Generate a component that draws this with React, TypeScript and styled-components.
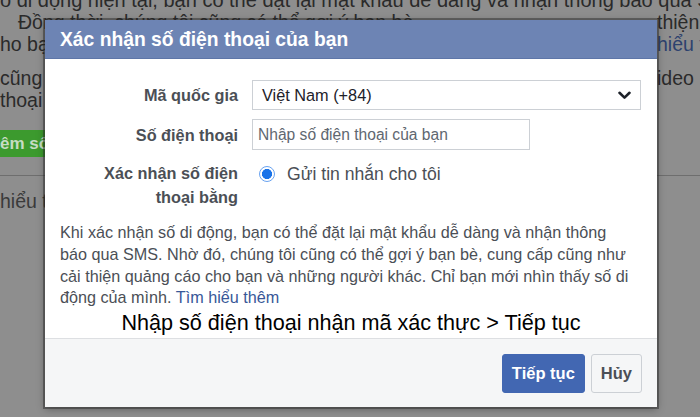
import React from "react";
import styled, { createGlobalStyle } from "styled-components";

const GlobalStyle = createGlobalStyle`
  html, body {
    margin: 0;
    padding: 0;
  }
  body {
    width: 700px;
    height: 417px;
    overflow: hidden;
    font-family: "Liberation Sans", Arial, sans-serif;
  }
`;

interface IBackLine {
  left: React.ReactNode;
  right?: React.ReactNode;
  indent?: number;
}

function BackLine(props: IBackLine) {
  return (
    <LineRow>
      <LeftFrag $indent={props.indent || 0}>{props.left}</LeftFrag>
      <RightFrag>{props.right}</RightFrag>
    </LineRow>
  );
}

function Chevron() {
  return (
    <svg width="13" height="9" viewBox="0 0 13 9">
      <path d="M1.5 1.8 L6.5 6.6 L11.5 1.8" fill="none" stroke="#1d2129" strokeWidth="2.6" strokeLinecap="round" strokeLinejoin="round" />
    </svg>
  );
}

const infoLines = [
  "Khi xác nhận số di động, bạn có thể đặt lại mật khẩu dễ dàng và nhận thông",
  "báo qua SMS. Nhờ đó, chúng tôi cũng có thể gợi ý bạn bè, cung cấp cũng như",
  "cải thiện quảng cáo cho bạn và những người khác. Chỉ bạn mới nhìn thấy số di",
];

export default function App() {
  return (
    <>
      <GlobalStyle />
      <Page>
        <BackText>
          <FullLine>o di động hiện tại, bạn có thể đặt lại mật khẩu dễ dàng và nhận thông báo qua SMS.</FullLine>
          <BackLine indent={18} left="Đồng thời, chúng tôi cũng có thể gợi ý bạn bè" right="thiện" />
          <BackLine left="ho bạn" right={<BackLink>hiểu thêm</BackLink>} />
          <Spacer />
          <BackLine left="cũng" right="ideo" />
          <BackLine left="thoại" right="" />
        </BackText>
        <GreenBar>êm số</GreenBar>
        <BackDivider />
        <BackTail>hiểu t</BackTail>
      </Page>

      <Dialog>
        <Header>Xác nhận số điện thoại của bạn</Header>
        <Body>
          <FormGrid>
            <Label>Mã quốc gia</Label>
            <Select>
              <span>Việt Nam (+84)</span>
              <Chevron />
            </Select>

            <Label>Số điện thoại</Label>
            <TextInput>Nhập số điện thoại của bạn</TextInput>

            <Label $multi>
              Xác nhận số điện
              <br />
              thoại bằng
            </Label>
            <RadioRow>
              <Radio />
              <span>Gửi tin nhắn cho tôi</span>
            </RadioRow>
          </FormGrid>

          <Info>
            {infoLines.map((line) => (
              <InfoLine key={line}>{line}</InfoLine>
            ))}
            <InfoLine>
              động của mình. <Link>Tìm hiểu thêm</Link>
            </InfoLine>
          </Info>
          <Caption>Nhập số điện thoại nhận mã xác thực &gt; Tiếp tục</Caption>
        </Body>
        <Footer>
          <Button $primary>Tiếp tục</Button>
          <Button>Hủy</Button>
        </Footer>
      </Dialog>
    </>
  );
}

const Page = styled.div`
  position: relative;
  width: 700px;
  height: 417px;
  overflow: hidden;
  background-color: #8e8e8e;
  color: #2a2a2a;
  font-size: 19.5px;
`;

const BackText = styled.div`
  display: flex;
  flex-direction: column;
  margin-top: -11px;
`;

const FullLine = styled.div`
  height: 22px;
  line-height: 22px;
  white-space: nowrap;
  overflow: hidden;
  font-size: 20px;
`;

const LineRow = styled.div`
  display: grid;
  grid-template-columns: minmax(0, 1fr) 43px;
  height: 22px;
  line-height: 22px;
  white-space: nowrap;
`;

const Spacer = styled.div`
  height: 12px;
`;

const LeftFrag = styled.span<{ $indent: number }>`
  padding-left: ${(p) => p.$indent}px;
  overflow: hidden;
`;

const RightFrag = styled.span`
  overflow: hidden;
`;

const BackLink = styled.span`
  color: #2d426e;
`;

const GreenBar = styled.div`
  margin-top: 19px;
  width: 60px;
  height: 27px;
  margin-left: -8px;
  padding-left: 8px;
  background-color: #3c9a2e;
  color: #c7dcc3;
  font-weight: bold;
  font-size: 17px;
  line-height: 27px;
`;

const BackDivider = styled.div`
  margin-top: 18px;
  height: 1px;
  background-color: #6e6e6e;
`;

const BackTail = styled.div`
  margin-top: 14px;
  color: #3a3a3a;
`;

const Dialog = styled.div`
  position: absolute;
  top: 20px;
  left: 45px;
  width: 612px;
  height: 387px;
  display: flex;
  flex-direction: column;
  background-color: #fff;
  box-shadow: 0 0 0 2px rgba(40, 40, 40, 0.45), 0 2px 8px rgba(0, 0, 0, 0.35);
`;

const Header = styled.div`
  height: 39px;
  padding-left: 15px;
  background-color: #6d84b4;
  color: #fff;
  font-size: 19.3px;
  font-weight: bold;
  line-height: 40px;
  border-bottom: 1px solid #5e76a8;
  box-sizing: border-box;
`;

const Body = styled.div`
  flex: 1;
  padding: 21px 15px 0;
`;

const FormGrid = styled.div`
  display: grid;
  grid-template-columns: 178px 1fr;
  column-gap: 14px;
  row-gap: 9px;
  align-items: center;
`;

const Label = styled.div<{ $multi?: boolean }>`
  text-align: right;
  color: #4b4f56;
  font-size: 16.3px;
  font-weight: bold;
  line-height: 24px;
  align-self: ${(p) => (p.$multi ? "start" : "center")};
  margin-top: ${(p) => (p.$multi ? "2px" : "0")};
`;

const Select = styled.div`
  display: flex;
  align-items: center;
  justify-content: space-between;
  width: 389px;
  height: 30px;
  padding: 0 9px 0 9px;
  box-sizing: border-box;
  border: 1px solid #ccd0d5;
  color: #1d2129;
  font-size: 16.3px;
`;

const TextInput = styled.div`
  width: 278px;
  height: 31px;
  padding-left: 5px;
  box-sizing: border-box;
  border: 1px solid #ccd0d5;
  color: #606770;
  font-size: 15.6px;
  line-height: 29px;
`;

const RadioRow = styled.div`
  display: flex;
  align-items: center;
  gap: 12px;
  align-self: start;
  margin-top: 3px;
  padding-left: 7px;
  color: #4b4f56;
  font-size: 17.6px;
  line-height: 24px;
`;

const Radio = styled.span`
  flex: none;
  width: 14px;
  height: 14px;
  border-radius: 50%;
  border: 1.5px solid #6aa3f0;
  background: radial-gradient(circle, #1a73e8 0 4.8px, #fff 5.3px);
`;

const Info = styled.div`
  margin-top: 13px;
  color: #4b4f56;
  font-size: 16.2px;
  line-height: 21.8px;
`;

const InfoLine = styled.div`
  white-space: nowrap;
`;

const Link = styled.span`
  color: #385898;
`;

const Caption = styled.div`
  text-align: center;
  color: #000;
  font-size: 21.6px;
  line-height: 28px;
`;

const Footer = styled.div`
  display: flex;
  justify-content: flex-end;
  align-items: center;
  gap: 6px;
  height: 68px;
  padding-right: 15px;
  background-color: #f5f6f7;
  border-top: 1px solid #dddfe2;
`;

const Button = styled.div<{ $primary?: boolean }>`
  height: 39px;
  padding: 0 9px;
  box-sizing: border-box;
  border-radius: 3px;
  border: 1px solid ${(p) => (p.$primary ? "#4267b2" : "#ccd0d5")};
  background-color: ${(p) => (p.$primary ? "#4267b2" : "#f5f6f7")};
  color: ${(p) => (p.$primary ? "#fff" : "#4b4f56")};
  font-size: 16.5px;
  font-weight: bold;
  line-height: 37px;
`;
